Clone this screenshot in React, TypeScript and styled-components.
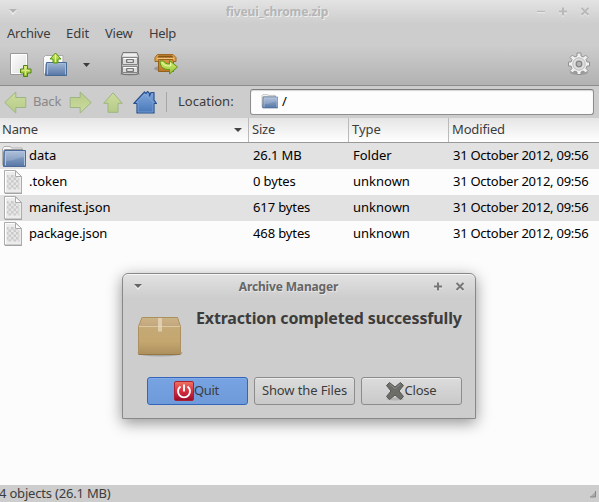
import React from "react";
import styled, { createGlobalStyle, css } from "styled-components";

const GlobalStyle = createGlobalStyle`
  * { box-sizing: border-box; }
  html, body { margin: 0; padding: 0; overflow: hidden; }
  body { font-family: "Noto Sans", "Open Sans", sans-serif; font-size: 13px; color: #3c3c3c; }
  svg { display: block; flex: none; }
`;

const Window = styled.div`
  position: relative;
  width: 599px;
  height: 502px;
  display: flex;
  flex-direction: column;
  background: #fcfcfc;
  overflow: hidden;
`;

const Chrome = styled.header`
  height: 86px;
  flex: none;
  border-bottom: 1px solid #8c8c8c;
  background: linear-gradient(#e3e3e3 0, #cdcdcd 24px, #cdcdcd 45px, #b2b2b2 85px);
`;

const Label = styled.span<{ $track?: number }>`
  white-space: pre;
  letter-spacing: ${(p) => p.$track ?? 0}px;
`;

const TitleBar = styled.div<{ $dialog?: boolean }>`
  display: grid;
  align-items: center;
  font-weight: 700;
  font-size: 12px;
  line-height: 16px;
  ${(p) =>
    p.$dialog
      ? css`
          height: 25px;
          grid-template-columns: 60px 1fr 42px;
          color: #666;
          text-shadow: 1px 1px 0 #e6e6e6;
        `
      : css`
          height: 23px;
          grid-template-columns: 60px 1fr 63px;
          color: #b5b5b5;
          text-shadow: 1px 1px 0 #eee;
        `}
`;

const Title = styled.div<{ $inset: number }>`
  text-align: center;
  padding-right: ${(p) => p.$inset}px;
`;

const MenuBar = styled.nav`
  display: flex;
  height: 21px;
  padding-left: 7px;
  line-height: 20px;
`;

const MenuItem = styled.div<{ $width: number }>`
  width: ${(p) => p.$width}px;
`;

const ToolBar = styled.div`
  display: flex;
  height: 41px;
  padding: 8px 8px 0 8px;
`;

const ToolSlot = styled.div<{ $width: number }>`
  width: ${(p) => p.$width}px;
  flex: none;
`;

const Spacer = styled.div`
  flex: 1;
`;

const LocationBar = styled.div`
  display: flex;
  align-items: center;
  flex: none;
  height: 32px;
  padding: 0 5px 0 4px;
  background: #cdcdcd;
`;

const BackText = styled.div`
  width: 36px;
  padding-bottom: 2px;
  color: #888;
`;

const Divider = styled.div`
  width: 1px;
  height: 20px;
  background: #a7a7a7;
`;

const LocationLabel = styled.div`
  width: 83px;
  padding: 0 0 2px 11px;
`;

const PathEntry = styled.div`
  display: flex;
  align-items: center;
  flex: 1;
  height: 26px;
  margin-bottom: 1px;
  padding: 0 0 1px 10px;
  gap: 4px;
  border: 1px solid #8e8e8e;
  border-top-color: #7c7c7c;
  border-radius: 3px;
  background: #fdfdfd;
  color: #000;
  box-shadow: inset 0 1px 1px #d5d5d5;
`;

const grid = css`
  display: grid;
  grid-template-columns: 249px 100px 100px 150px;
`;

const HeaderRow = styled.div`
  ${grid}
  height: 25px;
  flex: none;
  border-bottom: 1px solid #999;
  background: linear-gradient(#e5e5e5, #fff);
`;

const HeaderCell = styled.div<{ $first?: boolean; $last?: boolean }>`
  display: flex;
  align-items: center;
  justify-content: space-between;
  padding: 0 5px 2px ${(p) => (p.$first ? 2 : 3)}px;
  border-right: ${(p) => (p.$last ? "none" : "1px solid #bababa")};

  svg {
    margin-top: 3px;
  }
`;

const FileRow = styled.div<{ $shade: boolean }>`
  ${grid}
  grid-auto-rows: 26px;
  height: 26px;
  flex: none;
  color: #000;
  background: ${(p) => (p.$shade ? "#e2e2e2" : "#fcfcfc")};
`;

const FileCell = styled.div`
  display: flex;
  align-items: center;
  height: 26px;
  padding: 0 0 3px 4px;
`;

const NameCell = styled(FileCell)`
  padding-left: 0;
`;

const IconSlot = styled.div<{ $folder?: boolean }>`
  align-self: flex-start;
  width: 29px;
  height: 20px;
  padding: ${(p) => (p.$folder ? 3 : 1)}px 0 0 1px;
`;

const StatusBar = styled.footer`
  display: flex;
  justify-content: space-between;
  align-items: center;
  height: 17px;
  margin-top: auto;
  flex: none;
  background: #cdcdcd;
  line-height: 17px;
`;

const StatusText = styled.div`
  margin-left: -1px;
`;

const Dialog = styled.section`
  position: absolute;
  left: 122px;
  top: 273px;
  width: 354px;
  height: 146px;
  border: 1px solid #888;
  border-radius: 6px 6px 0 0;
  background: linear-gradient(#e2e2e2 0, #cdcdcd 24px);
  box-shadow: inset 0 1px 0 #f6f6f6, 0 4px 15px rgba(0, 0, 0, 0.42);
`;

const Message = styled.div`
  display: flex;
  height: 78px;
  padding: 17px 0 0 14px;
  gap: 13px;
`;

const MessageText = styled.div`
  margin-top: -9px;
  font-size: 16px;
  line-height: 22px;
  font-weight: 700;
`;

const Actions = styled.div`
  display: flex;
  gap: 6px;
  padding-left: 24px;
`;

const Button = styled.button<{ $primary?: boolean }>`
  display: flex;
  align-items: center;
  justify-content: center;
  width: 101px;
  height: 28px;
  padding: 0;
  font: inherit;
  color: #3c3c3c;
  border-radius: 3px;
  border: 1px solid ${(p) => (p.$primary ? "#3465b8" : "#8c8c8c")};
  background: ${(p) => (p.$primary ? "linear-gradient(#78a3e2, #6e9ad9)" : "linear-gradient(#dcdcdc, #c9c9c9)")};
  box-shadow: inset 0 1px 0 ${(p) => (p.$primary ? "#83abe8" : "#ebebeb")};

  ${Label} {
    padding-bottom: 2px;
  }

  svg + ${Label} {
    padding-right: 2px;
  }
`;

const TriangleDown = ({ color, light }: { color: string; light?: string }) => (
  <svg width="10" height="8" viewBox="0 0 10 8">
    {light && <path d="M1 2h8L5 7z" fill={light} />}
    <path d="M1 1h8L5 5z" fill={color} />
  </svg>
);

const WindowGlyph = ({ kind, color }: { kind: "min" | "max" | "close"; color: string }) => {
  const d = kind === "min" ? "M1 4.5h8" : kind === "max" ? "M1 4.5h8M5 .5v8" : "M1.5 1l7 7M8.5 1l-7 7";
  return (
    <svg width="10" height="10" viewBox="0 0 10 10" fill="none" strokeWidth={kind === "min" ? 1.3 : 2}>
      <path d={d} stroke="#eee" transform="translate(0 1)" />
      <path d={d} stroke={color} />
    </svg>
  );
};

const WindowControls = styled.div`
  display: flex;
  gap: 12px;
`;

const MenuHandle = styled.div<{ $left: number }>`
  padding-left: ${(p) => p.$left}px;
`;

const NewArchiveIcon = () => (
  <svg width="24" height="26" viewBox="0 0 24 26">
    <defs>
      <linearGradient id="paper" x2="1" y2="1"><stop stopColor="#fff" /><stop offset="1" stopColor="#ddd" /></linearGradient>
      <linearGradient id="plus" x2="0" y2="1"><stop stopColor="#e0ed83" /><stop offset="1" stopColor="#91ba2c" /></linearGradient>
    </defs>
    <path d="M2.500 1.500h17v21h-17z" fill="url(#paper)" stroke="#999" />
    <path d="M3.500 2.500h15v19h-15z" fill="none" stroke="#fff" />
    <path d="M15.500 13.500h4v3.500h3.500v4h-3.500v3.500h-4V21H12.500v-4h3z" fill="url(#plus)" stroke="#4d8510" />
    <path d="M17.500 15v8M14 18.500h7.500" stroke="#d9ea80" />
  </svg>
);

const FolderIcon = ({ small }: { small?: boolean }) => (
  <svg width={small ? 17 : 25} height={small ? 15 : 22} viewBox="0 0 25 22" preserveAspectRatio="none">
    <defs>
      <linearGradient id="folder" x2="0" y2="1"><stop stopColor="#a3b8d6" /><stop offset="1" stopColor="#5676a5" /></linearGradient>
    </defs>
    <path d="M1.500 19V2.500L3 .5h6.500l1 1.500h10.500v5H4v12z" fill="#f7f7f7" stroke="#b0b0b0" />
    <path d="M2.500 19V5.500l1-2H22" fill="none" stroke="#999" />
    <path d="M3.500 4.500H24.500V20.500h-22z" fill="url(#folder)" stroke="#4a6b99" />
    <path d="M4.500 19.500V5.500h19v14" fill="none" stroke="#b4c6df" />
    <path d="M5 6h18v5c-6 0-9 4-18 4z" fill="#fff" opacity=".15" />
  </svg>
);

const OpenIcon = () => (
  <svg width="26" height="25" viewBox="0 0 26 25">
    <defs><linearGradient id="openGreen" x2="0" y2="1"><stop stopColor="#daf06f" /><stop offset="1" stopColor="#92c139" /></linearGradient></defs>
    <path d="M1.500 22V5.500l2-2H21V12H4v10z" fill="#fafafa" stroke="#aaa" />
    <path d="M4.500 10.500h20V23.500H3.500z" fill="url(#folder)" stroke="#476996" />
    <path d="M5.500 22.500V11.500h18v11" fill="none" stroke="#a8bcda" />
    <path d="M13.500 1l5.500 6h-3v4h-5V7H8z" fill="url(#openGreen)" stroke="#55950d" />
    <path d="M13.500 3v7" stroke="#e8f5a5" />
  </svg>
);

const CabinetIcon = () => (
  <svg width="20" height="24" viewBox="0 0 20 24">
    <ellipse cx="10" cy="22" rx="10" ry="1.500" fill="#777" opacity=".6" />
    <path d="M3 .5h14l1.500 4v17H17v1H3v-1H1.500v-17z" fill="#c4c4c4" stroke="#777" />
    <path d="M3.500 1.500h13l1 3h-15z" fill="#eee" />
    <path d="M2.500 5.500h15v7h-15zM2.500 14.500h15v6h-15z" fill="#dcdcdc" stroke="#858585" />
    <path d="M3.500 6.500h13M3.500 15.500h13" stroke="#fff" />
    <path d="M6.500 7.500h7v3h-7zM6.500 16.500h7v3h-7z" fill="#bbb" stroke="#777" />
    <path d="M8 9h4M8 18h4" stroke="#fff" />
  </svg>
);

const ExtractIcon = () => (
  <svg width="24" height="24" viewBox="0 0 24 24">
    <defs><linearGradient id="box" x2="0" y2="1"><stop stopColor="#d49847" /><stop offset="1" stopColor="#b87828" /></linearGradient></defs>
    <ellipse cx="11" cy="16.500" rx="11" ry="3" fill="#555" opacity=".35" />
    <path d="M4.500 7.500h15V19.500h-15z" fill="url(#box)" stroke="#94601d" />
    <path d="M3.500 2.500h15.500l3 3v4h-2.500l-1.500-2.500h-13l-1 2.500h-3v-4z" fill="#dda14d" stroke="#a3681d" />
    <path d="M4.500 3.500h13.500l1.500 2H3.500z" fill="#8a5617" />
    <path d="M3 6.500h17" stroke="#f0c67c" />
    <path d="M6 9c0 6 4 9 9.500 8.500V22l8-7-8-6.500v3.500c-3 0-5-1-6-3z" fill="url(#openGreen)" stroke="#609414" />
    <path d="M8 10.500c1.500 3 4 3.500 8.500 3.500v-3" fill="none" stroke="#e8f7aa" />
  </svg>
);

const GearIcon = () => (
  <svg width="24" height="24" viewBox="0 0 24 24">
    <ellipse cx="12" cy="20.500" rx="9" ry="2.500" fill="#777" opacity=".45" />
    <path d="M10 1h4v3l2.500 1 2-2 2.500 2.500-2 2 1 2.500h2.500v4H20l-1 2.500 2 2-2.500 2.500-2-2L14 20v2.500h-4V20l-2.500-1-2 2L3 18.500l2-2L4 14H1.500v-4H4l1-2.500-2-2L5.500 3l2 2L10 4z" fill="#f1f1f1" stroke="#929292" strokeLinejoin="round" />
    <circle cx="12" cy="12" r="6.200" fill="#dedede" stroke="#bcbcbc" />
    <circle cx="12" cy="12" r="2.800" fill="#b5b5b5" stroke="#868686" strokeWidth="1.300" />
  </svg>
);

const NavArrow = ({ angle = 0 }: { angle?: number }) => (
  <svg width="23" height="23" viewBox="0 0 23 23">
    <defs><linearGradient id="pale" x2="0" y2="1"><stop stopColor="#cddc9d" /><stop offset="1" stopColor="#b6cb88" /></linearGradient></defs>
    <path d="M.8 11.500l11-10.500v5.500h10v10h-10V22z" fill="url(#pale)" stroke="#9db584" strokeLinejoin="round" transform={`rotate(${angle} 11.500 11.500)`} />
  </svg>
);

const UpArrow = () => (
  <svg width="20" height="21" viewBox="0 0 20 21">
    <path d="M10 .8l9.300 10.500H15v9H5v-9H.7z" fill="url(#pale)" stroke="#9db584" strokeLinejoin="round" />
  </svg>
);

const HomeIcon = () => (
  <svg width="24" height="23" viewBox="0 0 24 23">
    <defs><linearGradient id="home" x2="0" y2="1"><stop stopColor="#83a9dd" /><stop offset="1" stopColor="#4777b8" /></linearGradient></defs>
    <path d="M.8 12.500L11.500 1l1.500 1.500 1.500-2 2 2V5l1.500-3.500h3V9l2.500 3.500H21V22H4v-9.500z" fill="url(#home)" stroke="#28508d" strokeWidth="1.200" strokeLinejoin="round" />
    <path d="M5 21v-9.500H3L12 3l8.500 8.500H20V21z" fill="none" stroke="#8caee0" opacity=".6" />
  </svg>
);

const FileIcon = () => (
  <svg width="24" height="24" viewBox="0 0 24 24">
    <defs>
      <pattern id="checks" width="5" height="5" patternUnits="userSpaceOnUse"><rect width="5" height="5" fill="#e6e6e6" /><path d="M0 0h2.500v2.500H0zM2.500 2.500H5V5H2.500z" fill="#cacaca" /></pattern>
    </defs>
    <path d="M3.500.5h11l6 6v16.500h-17z" fill="#ececec" stroke="#acacac" />
    <path d="M4.500 1.500h10M4.500 1.500v20.500" stroke="#fff" />
    <path d="M6 5h8l4.500 4v10.500H6z" fill="url(#checks)" />
    <path d="M14.500 1v5.500h6z" fill="#fff" stroke="#aaa" />
    <path d="M4 23.500h17" stroke="#a3a3a3" />
  </svg>
);

const PackageIcon = () => (
  <svg width="46" height="42" viewBox="0 0 46 42">
    <defs><linearGradient id="cardboard" x2="0" y2="1"><stop stopColor="#c5aa7b" /><stop offset=".65" stopColor="#c4a76f" /><stop offset="1" stopColor="#ab8f5e" /></linearGradient>
    <linearGradient id="cardTop" x2="0" y2="1"><stop stopColor="#ccb385" /><stop offset="1" stopColor="#c2a67e" /></linearGradient></defs>
    <ellipse cx="23" cy="37" rx="22.500" ry="3.500" fill="#777" opacity=".45" />
    <path d="M5 1.500h35.500L43.500 10.500v28h-42v-28z" fill="url(#cardboard)" stroke="#ad905f" />
    <path d="M5.500 2h34.500l3 8.500H2z" fill="url(#cardTop)" />
    <path d="M2 10.500h41" stroke="#dcc8a1" />
    <path d="M2 38.500h41" stroke="#957743" />
    <path d="M21 2h4v13.500h-4z" fill="#e8dbc0" opacity=".7" />
  </svg>
);

const PowerIcon = () => (
  <svg width="20" height="20" viewBox="0 0 20 20">
    <defs><linearGradient id="power" x2="0" y2="1"><stop stopColor="#ed7562" /><stop offset=".5" stopColor="#d9303f" /><stop offset="1" stopColor="#970b2a" /></linearGradient></defs>
    <rect x=".5" y=".5" width="19" height="19" rx="1.500" fill="url(#power)" stroke="#ad2032" />
    <path d="M6.500 5.500a6 6 0 1 0 7 0M10 3.500v7" stroke="#fff" strokeWidth="1.900" fill="none" />
  </svg>
);

const CrossIcon = () => (
  <svg width="20" height="20" viewBox="0 0 20 20">
    <ellipse cx="10" cy="18" rx="9" ry="1.500" fill="#999" opacity=".5" />
    <path d="M4.500 1.500L10 6l5.500-4.500 3 3-4.500 5.500 4.500 5.500-3 3L10 14l-5.500 4.500-3-3L6 10 1.500 4.500z" fill="#6b6d69" stroke="#555753" strokeLinejoin="round" />
    <path d="M4.500 3L10 7.500 15.500 3" fill="none" stroke="#8b8b8b" />
  </svg>
);

const files = [
  { name: "data", size: "26.1 MB", type: "Folder", folder: true, track: 0 },
  { name: ".token", size: "0 bytes", type: "unknown", track: 0 },
  { name: "manifest.json", size: "617 bytes", type: "unknown", track: -0.08 },
  { name: "package.json", size: "468 bytes", type: "unknown", track: -0.15 },
];

export default function App() {
  return (
    <Window>
      <GlobalStyle />
      <Chrome>
        <TitleBar>
          <MenuHandle $left={8}><TriangleDown color="#b3b3b3" light="#f0f0f0" /></MenuHandle>
          <Title $inset={42}><Label $track={-0.12}>fiveui_chrome.zip</Label></Title>
          <WindowControls>
            <WindowGlyph kind="min" color="#b9b9b9" />
            <WindowGlyph kind="max" color="#b9b9b9" />
            <WindowGlyph kind="close" color="#b9b9b9" />
          </WindowControls>
        </TitleBar>
        <MenuBar>
          <MenuItem $width={59}><Label $track={-0.25}>Archive</Label></MenuItem>
          <MenuItem $width={39}><Label>Edit</Label></MenuItem>
          <MenuItem $width={44}><Label $track={-0.25}>View</Label></MenuItem>
          <MenuItem $width={40}><Label $track={-0.35}>Help</Label></MenuItem>
        </MenuBar>
        <ToolBar>
          <ToolSlot $width={34}><NewArchiveIcon /></ToolSlot>
          <ToolSlot $width={39}><OpenIcon /></ToolSlot>
          <ToolSlot $width={39}><svg width="12" height="24" viewBox="0 0 12 24"><path d="M2 11h7L5.500 15z" fill="#3c3c3c" /></svg></ToolSlot>
          <ToolSlot $width={34}><CabinetIcon /></ToolSlot>
          <ToolSlot $width={24}><ExtractIcon /></ToolSlot>
          <Spacer />
          <GearIcon />
        </ToolBar>
      </Chrome>
      <LocationBar>
        <ToolSlot $width={29}><NavArrow /></ToolSlot>
        <BackText><Label $track={-0.2}>Back</Label></BackText>
        <ToolSlot $width={34}><NavArrow angle={180} /></ToolSlot>
        <ToolSlot $width={30}><UpArrow /></ToolSlot>
        <ToolSlot $width={33}><HomeIcon /></ToolSlot>
        <Divider />
        <LocationLabel><Label>Location:</Label></LocationLabel>
        <PathEntry><FolderIcon small /><Label>/</Label></PathEntry>
      </LocationBar>
      <HeaderRow>
        <HeaderCell $first><Label $track={-0.2}>Name</Label><TriangleDown color="#444" /></HeaderCell>
        <HeaderCell><Label $track={-0.2}>Size</Label></HeaderCell>
        <HeaderCell><Label>Type</Label></HeaderCell>
        <HeaderCell $last><Label $track={-0.15}>Modified</Label></HeaderCell>
      </HeaderRow>
      {files.map((f, i) => (
        <FileRow key={f.name} $shade={i % 2 === 0}>
          <NameCell><IconSlot $folder={f.folder}>{f.folder ? <FolderIcon /> : <FileIcon />}</IconSlot><Label $track={f.track}>{f.name}</Label></NameCell>
          <FileCell><Label $track={-0.12}>{f.size}</Label></FileCell>
          <FileCell><Label>{f.type}</Label></FileCell>
          <FileCell><Label $track={-0.26}>31 October 2012, 09:56</Label></FileCell>
        </FileRow>
      ))}
      <StatusBar>
        <StatusText><Label $track={-0.19}>4 objects (26.1 MB)</Label></StatusText>
        <svg width="10" height="10" viewBox="0 0 10 10"><path d="M7 2v6H1z" fill="#aaa" /><path d="M6.500 2v6H1" fill="none" stroke="#888" /></svg>
      </StatusBar>
      <Dialog>
        <TitleBar $dialog>
          <MenuHandle $left={10}><TriangleDown color="#666" light="#eee" /></MenuHandle>
          <Title $inset={39}><Label $track={-0.15}>Archive Manager</Label></Title>
          <WindowControls>
            <WindowGlyph kind="max" color="#777" />
            <WindowGlyph kind="close" color="#777" />
          </WindowControls>
        </TitleBar>
        <Message>
          <PackageIcon />
          <MessageText><Label $track={-0.16}>Extraction completed successfully</Label></MessageText>
        </Message>
        <Actions>
          <Button $primary><PowerIcon /><Label $track={-0.3}>Quit</Label></Button>
          <Button><Label $track={-0.12}>Show the Files</Label></Button>
          <Button><CrossIcon /><Label $track={-0.2}>Close</Label></Button>
        </Actions>
      </Dialog>
    </Window>
  );
}
